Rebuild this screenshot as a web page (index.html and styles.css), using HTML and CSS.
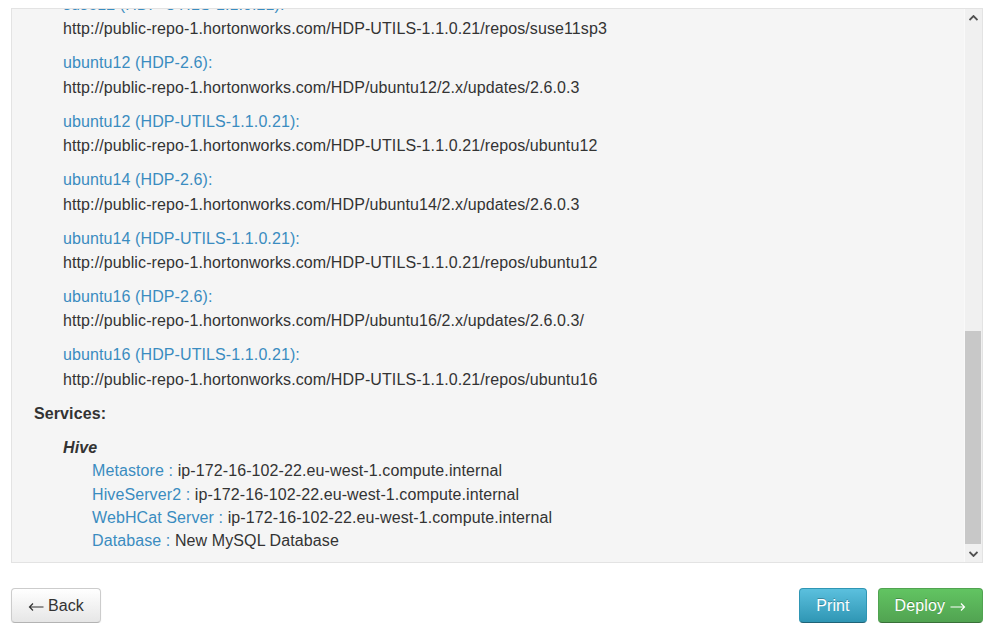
FILE: index.html
```html
<!DOCTYPE html>
<html>
<head>
<meta charset="utf-8">
<link rel="stylesheet" href="styles.css">
</head>
<body>
<div class="page">
  <div class="panel">
    <div class="viewport">
      <div class="content">
        <div class="repos">
          <div class="repo"><div class="label">suse12 (HDP-UTILS-1.1.0.21):</div><div class="url">http://public-repo-1.hortonworks.com/HDP-UTILS-1.1.0.21/repos/suse11sp3</div></div>
          <div class="repo"><div class="label">ubuntu12 (HDP-2.6):</div><div class="url">http://public-repo-1.hortonworks.com/HDP/ubuntu12/2.x/updates/2.6.0.3</div></div>
          <div class="repo"><div class="label">ubuntu12 (HDP-UTILS-1.1.0.21):</div><div class="url">http://public-repo-1.hortonworks.com/HDP-UTILS-1.1.0.21/repos/ubuntu12</div></div>
          <div class="repo"><div class="label">ubuntu14 (HDP-2.6):</div><div class="url">http://public-repo-1.hortonworks.com/HDP/ubuntu14/2.x/updates/2.6.0.3</div></div>
          <div class="repo"><div class="label">ubuntu14 (HDP-UTILS-1.1.0.21):</div><div class="url">http://public-repo-1.hortonworks.com/HDP-UTILS-1.1.0.21/repos/ubuntu12</div></div>
          <div class="repo"><div class="label">ubuntu16 (HDP-2.6):</div><div class="url">http://public-repo-1.hortonworks.com/HDP/ubuntu16/2.x/updates/2.6.0.3/</div></div>
          <div class="repo"><div class="label">ubuntu16 (HDP-UTILS-1.1.0.21):</div><div class="url">http://public-repo-1.hortonworks.com/HDP-UTILS-1.1.0.21/repos/ubuntu16</div></div>
        </div>
        <div class="section-title">Services:</div>
        <div class="service">
          <div class="service-name">Hive</div>
          <div class="components">
            <div class="comp"><span class="key">Metastore : </span>ip-172-16-102-22.eu-west-1.compute.internal</div>
            <div class="comp"><span class="key">HiveServer2 : </span>ip-172-16-102-22.eu-west-1.compute.internal</div>
            <div class="comp"><span class="key">WebHCat Server : </span>ip-172-16-102-22.eu-west-1.compute.internal</div>
            <div class="comp"><span class="key">Database : </span>New MySQL Database</div>
          </div>
        </div>
      </div>
    </div>
    <div class="scrollbar">
      <div class="arrow"><svg width="9" height="6" viewBox="0 0 9 6"><path d="M0.5 5 L4.5 1 L8.5 5" fill="none" stroke="#505050" stroke-width="1.8"/></svg></div>
      <div class="track"><div class="thumb"></div></div>
      <div class="arrow"><svg width="9" height="6" viewBox="0 0 9 6"><path d="M0.5 1 L4.5 5 L8.5 1" fill="none" stroke="#505050" stroke-width="1.8"/></svg></div>
    </div>
  </div>
  <div class="actions">
    <button class="btn btn-default"><svg class="arr" width="16" height="10" viewBox="0 0 16 10"><path d="M15.5 5 H1.5 M5 1.5 L1.5 5 L5 8.5" fill="none" stroke="#333" stroke-width="1.2"/></svg>Back</button>
    <div class="right">
      <button class="btn btn-info">Print</button>
      <button class="btn btn-success">Deploy<svg class="arr arr-r" width="16" height="10" viewBox="0 0 16 10"><path d="M0.5 5 H14.5 M11 1.5 L14.5 5 L11 8.5" fill="none" stroke="#fff" stroke-width="1.2"/></svg></button>
    </div>
  </div>
</div>
</body>
</html>
```
FILE: styles.css
```css
* { box-sizing: border-box; }
html, body { margin: 0; padding: 0; background: #fff; }
body {
  font-family: "Liberation Sans", Arial, sans-serif;
  font-size: 16px;
  color: #333;
  letter-spacing: 0.1px;
}
.page {
  padding: 8px 0 0 11px;
  width: 983px;
}
.panel {
  display: flex;
  height: 555px;
  border: 1px solid #e3e3e3;
  background: #f5f5f5;
}
.viewport {
  flex: 1;
  overflow: hidden;
}
.content {
  margin-top: -15px;
  padding-left: 22px;
}
.repos {
  padding-left: 29px;
}
.repo {
  margin-bottom: 12px;
}
.label {
  color: #3a8cc0;
  line-height: 22px;
}
.url {
  line-height: 22px;
  margin-top: 2.4px;
  color: #333;
}
.section-title {
  font-weight: bold;
  line-height: 22px;
}
.service {
  margin-top: 12px;
  padding-left: 29px;
}
.service-name {
  font-weight: bold;
  font-style: italic;
  line-height: 22px;
}
.components {
  padding-left: 29px;
  margin-top: 0.5px;
}
.comp {
  line-height: 23.3px;
}
.key { color: #3a8cc0; }
.scrollbar {
  width: 18px;
  display: flex;
  flex-direction: column;
  background: #f0f0f0;
  border-left: 1px solid #f9f9f9;
}
.arrow {
  height: 17px;
  display: flex;
  align-items: center;
  justify-content: center;
}
.track { flex: 1; }
.thumb {
  margin-top: 305px;
  height: 213px;
  background: #c8c8c8;
  margin-right: 1px;
}
.actions {
  display: flex;
  justify-content: space-between;
  margin-top: 25px;
}
.right { display: flex; gap: 11px; }
.btn {
  display: inline-flex;
  align-items: center;
  font-family: "Liberation Sans", Arial, sans-serif;
  font-size: 16px;
  line-height: 20px;
  letter-spacing: 0.1px;
  padding: 7px 16px 6px;
  border-radius: 4px;
  border: 1px solid #ccc;
  cursor: pointer;
}
.arr { margin-right: 4px; margin-top: 1px; }
.arr-r { margin-right: 0; margin-left: 5px; }
.btn-default {
  color: #333;
  background: linear-gradient(#ffffff, #e6e6e6);
  border-color: #cccccc #cccccc #b3b3b3;
  box-shadow: inset 0 1px 0 rgba(255,255,255,.2), 0 1px 2px rgba(0,0,0,.05);
}
.btn-info {
  color: #fff;
  background: linear-gradient(#5bc0de, #2f96b4);
  border-color: #2f96b4 #2f96b4 #1f6377;
  text-shadow: 0 -1px 0 rgba(0,0,0,.25);
}
.btn-success {
  color: #fff;
  background: linear-gradient(#62c462, #51a351);
  border-color: #51a351 #51a351 #387038;
  text-shadow: 0 -1px 0 rgba(0,0,0,.25);
}
```
